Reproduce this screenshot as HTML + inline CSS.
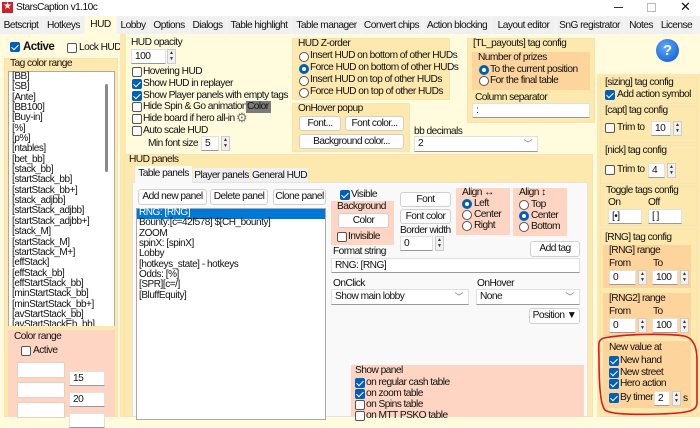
<!DOCTYPE html>
<html><head><meta charset="utf-8">
<style>
*{box-sizing:border-box;margin:0;padding:0}
body{width:700px;height:417px;overflow:hidden;position:relative;background:#fffbdc;font-family:"Liberation Sans",Arial,sans-serif;font-size:10.2px;letter-spacing:-0.55px;color:#111}
div,span{position:absolute}
.t{white-space:nowrap;line-height:12px}
.g{background:#fde9ae;border:1px solid #f7e2b5}
.s{background:#fdd5c2}
.o{background:#fdd49c}
.w{background:#fff}
.btn{background:#fdfdfd;border:1px solid #d0d0d0;border-radius:3px;text-align:center;line-height:13px;white-space:nowrap}
.in{background:#fff;border:1px solid #e0e0e0;border-bottom:1px solid #999;padding-left:3px;line-height:13px;white-space:nowrap}
.cb{width:10px;height:10px;border:1px solid #555;border-radius:2px;background:#fff}
.cb.k{background:#005fb8;border-color:#005fb8}
.cb.k:after{content:"";position:absolute;left:2px;top:0px;width:3px;height:6px;border:solid #fff;border-width:0 1.5px 1.5px 0;transform:rotate(45deg)}
.rb{width:10px;height:10px;border:1px solid #555;border-radius:50%;background:#fff}
.rb.k{background:#005fb8;border-color:#005fb8}
.rb.k:after{content:"";position:absolute;left:2px;top:2px;width:4px;height:4px;border-radius:50%;background:#fff}
.sp{width:9px;background:#f0f0f0;border:1px solid #ccc;font-size:5px;text-align:center;line-height:6px;color:#333;letter-spacing:0}
.tab{top:17px;height:17px;background:#f0f0f0;line-height:17px;text-align:center}
.lst{line-height:10.35px;font-size:10px;letter-spacing:-0.45px}
</style></head><body>
<!-- title bar -->
<div style="left:0;top:0;width:700px;height:16px;background:#fff"></div>
<div style="left:2px;top:2px;width:11px;height:11px;background:#d0202a"><span class="t" style="left:1px;top:-1px;color:#fff;font-size:10px">★</span></div>
<span class="t" style="left:16px;top:2px">StarsCaption v1.10c</span>
<div style="left:614px;top:7px;width:9px;height:1px;background:#333"></div>
<div style="left:647px;top:3px;width:9px;height:9px;border:1px solid #bbb"></div>
<span class="t" style="left:680px;top:1px;font-size:13px">✕</span>
<!-- tab bar -->
<div style="left:0;top:16px;width:700px;height:18px;background:#f3f3f3"></div>
<span class="t tab" style="left:0;width:42px">Betscript</span>
<span class="t tab" style="left:44px;width:39px">Hotkeys</span>
<span class="t tab" style="left:85px;width:31px;background:#fffbdc;top:16px;height:18px">HUD</span>
<span class="t tab" style="left:118px;width:30px">Lobby</span>
<span class="t tab" style="left:150px;width:38px">Options</span>
<span class="t tab" style="left:190px;width:35px">Dialogs</span>
<span class="t tab" style="left:228px;width:62px">Table highlight</span>
<span class="t tab" style="left:293px;width:67px">Table manager</span>
<span class="t tab" style="left:362px;width:59px">Convert chips</span>
<span class="t tab" style="left:424px;width:66px">Action blocking</span>
<span class="t tab" style="left:493px;width:61px">Layout editor</span>
<span class="t tab" style="left:557px;width:65px">SnG registrator</span>
<span class="t tab" style="left:625px;width:32px">Notes</span>
<span class="t tab" style="left:659px;width:35px">License</span>

<!-- left column -->
<div class="cb k" style="left:10px;top:42px"></div><span class="t" style="left:23px;top:41px;font-weight:bold;font-size:11.5px">Active</span>
<div class="cb" style="left:67px;top:43px"></div><span class="t" style="left:79px;top:42px">Lock HUD</span>
<div class="g" style="left:4px;top:58px;width:114px;height:359px"></div>
<span class="t" style="left:10px;top:58px">Tag color range</span>
<div style="left:8px;top:71px;width:107px;height:257px;background:#fff;border:1px solid #aaa"></div>
<div style="left:105px;top:84px;width:3px;height:88px;background:#8a8a8a;border-radius:2px"></div>
<div class="t lst" style="left:12px;top:72px">[BB]<br>[SB]<br>[Ante]<br>[BB100]<br>[Buy-in]<br>[%]<br>[p%]<br>[ntables]<br>[bet_bb]<br>[stack_bb]<br>[startStack_bb]<br>[startStack_bb+]<br>[stack_adjbb]<br>[startStack_adjbb]<br>[startStack_adjbb+]<br>[stack_M]<br>[startStack_M]<br>[startStack_M+]<br>[effStack]<br>[effStack_bb]<br>[effStartStack_bb]<br>[minStartStack_bb]<br>[minStartStack_bb+]<br>[avStartStack_bb]<br>[avStartStackEh_bb]</div>
<div style="left:8px;top:326px;width:107px;height:4px;background:#fde9ae"></div>
<div class="s" style="left:8px;top:330px;width:107px;height:87px"></div>
<span class="t" style="left:14px;top:331px">Color range</span>
<div class="cb" style="left:21px;top:346px"></div><span class="t" style="left:33px;top:345px">Active</span>
<div class="w" style="left:17px;top:362px;width:48px;height:16px;border:1px solid #e6d0c0"></div>
<div class="w" style="left:17px;top:382px;width:48px;height:16px;border:1px solid #e6d0c0"></div>
<div class="w" style="left:17px;top:402px;width:48px;height:16px;border:1px solid #e6d0c0"></div>
<div class="in" style="left:69px;top:371px;width:36px;height:15px">15</div>
<div class="in" style="left:69px;top:392px;width:36px;height:15px">20</div>
<div class="in" style="left:69px;top:413px;width:36px;height:15px"></div>

<!-- middle top -->
<div style="left:120px;top:34px;width:6px;height:383px;background:#fde9ae"></div>
<span class="t" style="left:131px;top:37px">HUD opacity</span>
<div class="in" style="left:131px;top:49px;width:35px;height:15px">100</div>
<div class="sp" style="left:167px;top:49px;height:15px">▲<br>▼</div>
<div class="cb" style="left:132px;top:67px"></div><span class="t" style="left:143px;top:66px">Hovering HUD</span>
<div class="cb k" style="left:132px;top:79px"></div><span class="t" style="left:143px;top:78px">Show HUD in replayer</span>
<div class="cb k" style="left:132px;top:91px"></div><span class="t" style="left:143px;top:90px">Show Player panels with empty tags</span>
<div class="cb" style="left:132px;top:102px"></div><span class="t" style="left:143px;top:101px">Hide Spin &amp; Go animation</span>
<span class="t" style="left:246px;top:101px;background:#7b7b7b;color:#111;padding:0 1px;width:25px">Color</span>
<div class="cb" style="left:132px;top:114px"></div><span class="t" style="left:143px;top:113px">Hide board if hero all-in</span>
<span class="t" style="left:236px;top:112px;color:#777;font-size:13px">⚙</span>
<div class="cb" style="left:132px;top:126px"></div><span class="t" style="left:143px;top:125px">Auto scale HUD</span>
<span class="t" style="left:148px;top:138px">Min font size</span>
<div class="in" style="left:201px;top:136px;width:18px;height:15px">5</div>
<div class="sp" style="left:221px;top:136px;height:15px">▲<br>▼</div>

<!-- Z-order -->
<div class="g" style="left:292px;top:38px;width:158px;height:62px"></div>
<span class="t" style="left:298px;top:38px">HUD Z-order</span>
<div class="rb" style="left:299px;top:52px"></div><span class="t" style="left:310px;top:50px">Insert HUD on bottom of other HUDs</span>
<div class="rb k" style="left:299px;top:64px"></div><span class="t" style="left:310px;top:62px">Force HUD on bottom of other HUDs</span>
<div class="rb" style="left:299px;top:76px"></div><span class="t" style="left:310px;top:74px">Insert HUD on top of other HUDs</span>
<div class="rb" style="left:299px;top:88px"></div><span class="t" style="left:310px;top:86px">Force HUD on top of other HUDs</span>
<!-- OnHover -->
<div class="g" style="left:292px;top:103px;width:118px;height:49px"></div>
<span class="t" style="left:298px;top:103px">OnHover popup</span>
<div class="btn" style="left:299px;top:116px;width:42px;height:15px">Font...</div>
<div class="btn" style="left:345px;top:116px;width:59px;height:15px">Font color...</div>
<div class="btn" style="left:299px;top:134px;width:105px;height:15px">Background color...</div>
<span class="t" style="left:414px;top:126px">bb decimals</span>
<div class="in" style="left:414px;top:136px;width:124px;height:16px">2<span class="t" style="right:5px;top:1px;color:#777;font-size:9px">﹀</span></div>
<!-- TL payouts -->
<div class="g" style="left:467px;top:38px;width:128px;height:85px"></div>
<span class="t" style="left:473px;top:38px">[TL_payouts] tag config</span>
<div class="o" style="left:472px;top:52px;width:118px;height:38px"></div>
<span class="t" style="left:478px;top:52px">Number of prizes</span>
<div class="rb k" style="left:479px;top:65px"></div><span class="t" style="left:490px;top:64px">To the current position</span>
<div class="rb" style="left:479px;top:76px"></div><span class="t" style="left:490px;top:75px">For the final table</span>
<span class="t" style="left:475px;top:92px">Column separator</span>
<div class="in" style="left:472px;top:103px;width:118px;height:15px">:</div>
<!-- help -->
<div style="left:656px;top:39px;width:23px;height:23px;border-radius:50%;background:radial-gradient(circle at 40% 35%,#5aa8ff,#0a55c8);color:#fff;font-weight:bold;font-size:15px;text-align:center;line-height:23px;letter-spacing:0">?</div>

<!-- right column -->
<div style="left:597px;top:74px;width:103px;height:343px;background:#fde9ae"></div>
<div class="g" style="left:600px;top:77px;width:97px;height:27px"></div>
<span class="t" style="left:605px;top:77px">[sizing] tag config</span>
<div class="cb k" style="left:605px;top:90px"></div><span class="t" style="left:617px;top:89px">Add action symbol</span>
<div class="g" style="left:600px;top:106px;width:97px;height:37px"></div>
<span class="t" style="left:605px;top:105px">[capt] tag config</span>
<div class="cb" style="left:605px;top:123px"></div><span class="t" style="left:617px;top:122px">Trim to</span>
<div class="in" style="left:651px;top:121px;width:20px;height:15px">10</div>
<div class="sp" style="left:673px;top:121px;height:15px">▲<br>▼</div>
<div class="g" style="left:600px;top:145px;width:97px;height:39px"></div>
<span class="t" style="left:605px;top:145px">[nick] tag config</span>
<div class="cb" style="left:605px;top:165px"></div><span class="t" style="left:617px;top:164px">Trim to</span>
<div class="in" style="left:648px;top:163px;width:17px;height:15px">4</div>
<div class="sp" style="left:667px;top:163px;height:15px">▲<br>▼</div>
<div class="g" style="left:600px;top:186px;width:97px;height:40px"></div>
<span class="t" style="left:606px;top:185px">Toggle tags config</span>
<span class="t" style="left:608px;top:197px">On</span><span class="t" style="left:648px;top:197px">Off</span>
<div class="in" style="left:608px;top:209px;width:34px;height:15px">[•]</div>
<div class="in" style="left:648px;top:209px;width:34px;height:15px">[ ]</div>
<div class="g" style="left:600px;top:229px;width:97px;height:188px"></div>
<span class="t" style="left:605px;top:232px">[RNG] tag config</span>
<div class="o" style="left:603px;top:245px;width:88px;height:43px"></div>
<span class="t" style="left:609px;top:245px">[RNG] range</span>
<span class="t" style="left:609px;top:258px">From</span><span class="t" style="left:653px;top:258px">To</span>
<div class="in" style="left:609px;top:270px;width:27px;height:15px">0</div>
<div class="sp" style="left:638px;top:270px;height:15px">▲<br>▼</div>
<div class="in" style="left:652px;top:270px;width:26px;height:15px">100</div>
<div class="sp" style="left:680px;top:270px;height:15px">▲<br>▼</div>
<div class="o" style="left:603px;top:293px;width:88px;height:43px"></div>
<span class="t" style="left:609px;top:293px">[RNG2] range</span>
<span class="t" style="left:609px;top:306px">From</span><span class="t" style="left:653px;top:306px">To</span>
<div class="in" style="left:609px;top:318px;width:27px;height:15px">0</div>
<div class="sp" style="left:638px;top:318px;height:15px">▲<br>▼</div>
<div class="in" style="left:652px;top:318px;width:26px;height:15px">100</div>
<div class="sp" style="left:680px;top:318px;height:15px">▲<br>▼</div>
<div class="o" style="left:603px;top:341px;width:88px;height:67px"></div>
<span class="t" style="left:609px;top:342px">New value at</span>
<div class="cb k" style="left:609px;top:356px"></div><span class="t" style="left:620px;top:355px">New hand</span>
<div class="cb k" style="left:609px;top:368px"></div><span class="t" style="left:620px;top:367px">New street</span>
<div class="cb k" style="left:609px;top:379px"></div><span class="t" style="left:620px;top:378px">Hero action</span>
<div class="cb k" style="left:609px;top:393px"></div><span class="t" style="left:620px;top:392px">By timer</span>
<div class="in" style="left:654px;top:391px;width:16px;height:15px">2</div>
<div class="sp" style="left:672px;top:391px;height:15px">▲<br>▼</div>
<span class="t" style="left:683px;top:393px">s</span>
<svg style="position:absolute;left:0;top:0" width="700" height="417"><path d="M604 338 C630 333 670 334 684 336 C694 338 697 348 697 360 L697 402 C697 411 690 413 660 414 C630 415 610 414 605 410 C600 405 599 380 599 358 C599 345 597 340 604 338 Z" fill="none" stroke="#e0161e" stroke-width="1.6"/></svg>

<!-- HUD panels -->
<div class="g" style="left:124px;top:154px;width:469px;height:263px"></div>
<span class="t" style="left:129px;top:154px">HUD panels</span>
<div style="left:132px;top:182px;width:456px;height:235px;background:#f9f9f9;border:1px solid #e3e3e3"></div>
<span class="t" style="left:135px;top:166px;width:57px;height:17px;background:#f9f9f9;line-height:16px;text-align:center">Table panels</span>
<span class="t" style="left:193px;top:168px;width:57px;height:14px;background:#f0f0f0;text-align:center;line-height:15px">Player panels</span>
<span class="t" style="left:251px;top:168px;width:57px;height:14px;background:#f0f0f0;text-align:center;line-height:15px">General HUD</span>
<div class="btn" style="left:138px;top:189px;width:69px;height:16px">Add new panel</div>
<div class="btn" style="left:210px;top:189px;width:58px;height:16px">Delete panel</div>
<div class="btn" style="left:273px;top:189px;width:53px;height:16px">Clone panel</div>
<div style="left:136px;top:208px;width:190px;height:212px;background:#fff;border:1px solid #aaa"></div>
<div style="left:137px;top:209px;width:188px;height:10px;background:#0078d7"></div>
<div class="t lst" style="left:139px;top:208px"><span style="position:static;color:#fff">RNG: [RNG]</span><br>Bounty:[c=42f578] $[CH_bounty]<br>ZOOM<br>spinX: [spinX]<br>Lobby<br>[hotkeys_state] - hotkeys<br>Odds: [%]<br>[SPR][c=/]<br>[BluffEquity]</div>
<div class="cb k" style="left:340px;top:190px"></div><span class="t" style="left:351px;top:189px">Visible</span>
<div class="s" style="left:331px;top:201px;width:63px;height:44px"></div>
<span class="t" style="left:337px;top:201px">Background</span>
<div class="btn" style="left:338px;top:213px;width:51px;height:15px">Color</div>
<div class="cb" style="left:337px;top:232px"></div><span class="t" style="left:348px;top:231px">Invisible</span>
<div class="btn" style="left:400px;top:192px;width:51px;height:15px">Font</div>
<div class="btn" style="left:400px;top:209px;width:51px;height:15px">Font color</div>
<span class="t" style="left:400px;top:225px">Border width</span>
<div class="in" style="left:400px;top:236px;width:33px;height:15px">0</div>
<div class="sp" style="left:435px;top:236px;height:15px">▲<br>▼</div>
<div class="s" style="left:456px;top:188px;width:54px;height:47px"></div>
<span class="t" style="left:462px;top:187px">Align ↔</span>
<div class="rb k" style="left:462px;top:199px"></div><span class="t" style="left:474px;top:198px">Left</span>
<div class="rb" style="left:462px;top:210px"></div><span class="t" style="left:474px;top:209px">Center</span>
<div class="rb" style="left:462px;top:221px"></div><span class="t" style="left:474px;top:220px">Right</span>
<div class="s" style="left:513px;top:188px;width:54px;height:48px"></div>
<span class="t" style="left:519px;top:187px">Align ↕</span>
<div class="rb" style="left:519px;top:200px"></div><span class="t" style="left:531px;top:199px">Top</span>
<div class="rb k" style="left:519px;top:211px"></div><span class="t" style="left:531px;top:210px">Center</span>
<div class="rb" style="left:519px;top:222px"></div><span class="t" style="left:531px;top:221px">Bottom</span>
<span class="t" style="left:333px;top:246px">Format string</span>
<div class="btn" style="left:530px;top:241px;width:50px;height:16px">Add tag</div>
<div class="in" style="left:331px;top:258px;width:249px;height:15px">RNG: [RNG]</div>
<span class="t" style="left:333px;top:278px">OnClick</span>
<div class="in" style="left:331px;top:289px;width:138px;height:16px">Show main lobby<span class="t" style="right:5px;top:1px;color:#777;font-size:9px">﹀</span></div>
<span class="t" style="left:477px;top:278px">OnHover</span>
<div class="in" style="left:476px;top:289px;width:104px;height:16px">None<span class="t" style="right:5px;top:1px;color:#777;font-size:9px">﹀</span></div>
<div class="btn" style="left:529px;top:308px;width:51px;height:16px">Position ▼</div>
<div class="s" style="left:351px;top:365px;width:233px;height:52px"></div>
<span class="t" style="left:355px;top:365px">Show panel</span>
<div class="cb k" style="left:355px;top:378px"></div><span class="t" style="left:366px;top:377px">on regular cash table</span>
<div class="cb k" style="left:355px;top:389px"></div><span class="t" style="left:366px;top:388px">on zoom table</span>
<div class="cb" style="left:355px;top:400px"></div><span class="t" style="left:366px;top:399px">on Spins table</span>
<div class="cb" style="left:355px;top:411px"></div><span class="t" style="left:366px;top:410px">on MTT PSKO table</span>
</body></html>
